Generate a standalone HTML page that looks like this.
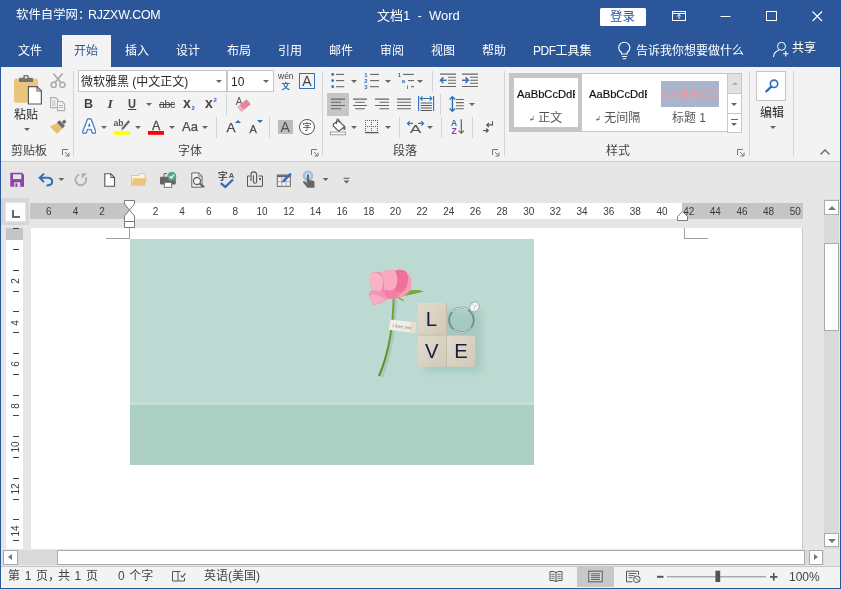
<!DOCTYPE html>
<html><head><meta charset="utf-8">
<style>
*{box-sizing:border-box;margin:0;padding:0}
html,body{width:841px;height:589px;overflow:hidden;background:#fff}
body{font-family:"Liberation Sans","Noto Sans CJK SC",sans-serif;font-size:12px;color:#262626;position:relative}
.a{position:absolute}
.t{position:absolute;white-space:nowrap;line-height:1}
#win{position:absolute;left:0;top:0;width:841px;height:589px;background:#e6e6e6;overflow:hidden;will-change:transform;opacity:.9999}
#title{left:0;top:0;width:841px;height:67px;background:#2b579a}
.w{color:#fff}
#ribbon{left:1px;top:67px;width:839px;height:95px;background:#f3f3f3;border-bottom:1px solid #cfcfcf}
.sep{position:absolute;width:1px;background:#d4d4d4}
.gl{position:absolute;font-size:12px;color:#444;line-height:1;white-space:nowrap}
svg{position:absolute;overflow:visible}
.rn{font-size:10px;color:#3b3b3b;width:20px;text-align:center}
.vn{transform:rotate(-90deg);transform-origin:50% 50%;width:20px;height:10px}
.sb{background:#fff;border:1px solid #ababab}
.tri-u{width:0;height:0;border-left:4px solid transparent;border-right:4px solid transparent;border-bottom:4px solid #777}
.tri-d{width:0;height:0;border-left:4px solid transparent;border-right:4px solid transparent;border-top:4px solid #777}
.tri-l{width:0;height:0;border-top:3.500px solid transparent;border-bottom:3.500px solid transparent;border-right:4.500px solid #777}
.tri-r{width:0;height:0;border-top:3.500px solid transparent;border-bottom:3.500px solid transparent;border-left:4.500px solid #777}
.dd{width:0;height:0;border-left:3px solid transparent;border-right:3px solid transparent;border-top:3px solid #666}
.box{background:#fff;border:1px solid #c6c6c6}
.sty{font-family:"Liberation Sans",sans-serif;font-size:11.200px;color:#111;width:58px;overflow:hidden;-webkit-text-stroke:.2px #111}
</style></head><body>
<div id="win">
<!-- TITLE BAR -->
<div class="a" id="title"></div>
<div class="t w" style="left:16px;top:8.500px;font-size:12.400px">软件自学网<span style="display:inline-block;width:10px">：</span><span style="letter-spacing:-.2px">RJZXW.COM</span></div>
<div class="t w" style="left:377px;top:9px;font-size:13px">文档1&nbsp; -&nbsp; Word</div>
<div class="a" style="left:600px;top:7.500px;width:46px;height:18.500px;background:#fff;border-radius:1.500px"></div>
<div class="t" style="left:610px;top:11px;font-size:12.500px;color:#2b579a">登录</div>
<svg style="left:590px;top:0" width="251" height="67" viewBox="590 0 251 67">
<g fill="none" stroke="#fff" stroke-width="1">
<rect x="672.500" y="11.500" width="13" height="9"/><path d="M672.500 13.500h13M679 19v-4.500M677 16.500l2-2l2 2"/>
<path d="M720.500 16.500h10"/>
<rect x="766.500" y="11.500" width="10" height="9"/>
<path d="M812.500 11.500l9.500 9.500M822 11.500l-9.500 9.500" stroke-width="1.100"/>
<path d="M621.500 54v-1.500q-2.800-2-2.800-4.700a5.600 5.600 0 0 1 11.200 0q0 2.700-2.800 4.700v1.500zM622 56.500h5M622.800 58.700h3.400" stroke-width="1.100"/>
<circle cx="781.500" cy="46.300" r="4"/><path d="M773.500 57q.5-5.500 5.500-6.800M783 53.800h5.500M785.700 51v5.600" stroke-width="1.100"/>
</g></svg>
<!-- tabs -->
<div class="a" style="left:62px;top:35px;width:49px;height:32px;background:#f3f3f3"></div>
<div class="t w" style="left:18px;top:44.500px">文件</div>
<div class="t" style="left:74px;top:44.500px;color:#2b579a">开始</div>
<div class="t w" style="left:125px;top:44.500px">插入</div>
<div class="t w" style="left:176px;top:44.500px">设计</div>
<div class="t w" style="left:227px;top:44.500px">布局</div>
<div class="t w" style="left:278px;top:44.500px">引用</div>
<div class="t w" style="left:329px;top:44.500px">邮件</div>
<div class="t w" style="left:380px;top:44.500px">审阅</div>
<div class="t w" style="left:431px;top:44.500px">视图</div>
<div class="t w" style="left:482px;top:44.500px">帮助</div>
<div class="t w" style="left:533px;top:44.500px"><span style="letter-spacing:-.5px">PDF</span>工具集</div>
<div class="t w" style="left:636px;top:44.500px">告诉我你想要做什么</div>
<div class="t w" style="left:792px;top:42px">共享</div>
<!-- RIBBON -->
<div class="a" id="ribbon"></div>
<div class="sep" style="left:73px;top:71px;height:85px"></div>
<div class="sep" style="left:322px;top:71px;height:85px"></div>
<div class="sep" style="left:504px;top:71px;height:85px"></div>
<div class="sep" style="left:749px;top:71px;height:85px"></div>
<div class="sep" style="left:793px;top:71px;height:85px"></div>
<div class="gl" style="left:14px;top:109px;color:#262626">粘贴</div>
<div class="a dd" style="left:24px;top:128px;border-top-color:#666"></div>
<div class="gl" style="left:11px;top:145px">剪贴板</div>
<svg style="left:62px;top:149px" width="8" height="8" viewBox="0 0 8 8"><path d="M0.500 6V0.500H6" fill="none" stroke="#777"/><path d="M3 3l3.500 3.500M7 3.500V7H3.500" fill="none" stroke="#777"/></svg>
<div class="a box" style="left:78px;top:70px;width:149px;height:22px"></div>
<div class="a box" style="left:227px;top:70px;width:47px;height:22px"></div>
<div class="t" style="left:81px;top:76px;font-size:12px;color:#262626">微软雅黑 (中文正文)</div>
<div class="t" style="left:231px;top:76px;font-size:12px;color:#262626">10</div>
<div class="a dd" style="left:216px;top:80px;border-top-color:#666"></div>
<div class="a dd" style="left:263px;top:80px;border-top-color:#666"></div>
<div class="gl" style="left:178px;top:145px">字体</div>
<svg style="left:311px;top:149px" width="8" height="8" viewBox="0 0 8 8"><path d="M0.500 6V0.500H6" fill="none" stroke="#777"/><path d="M3 3l3.500 3.500M7 3.500V7H3.500" fill="none" stroke="#777"/></svg>
<div class="t" style="left:84px;top:97.500px;font-size:12.500px;font-weight:bold;color:#444">B</div>
<div class="t" style="left:107.500px;top:96.500px;font-size:13.500px;font-style:italic;font-family:'Liberation Serif',serif;font-weight:bold;color:#444">I</div>
<div class="t" style="left:128px;top:98px;font-size:12px;font-weight:bold;color:#444;border-bottom:1px solid #444;padding-bottom:0px;height:12px;transform:scaleX(.92);transform-origin:0 0">U</div>
<div class="a dd" style="left:146px;top:103px;border-top-color:#666"></div>
<div class="t" style="left:159px;top:99px;font-size:10.500px;color:#444;text-decoration:line-through;letter-spacing:-.4px">abc</div>
<div class="t" style="left:183px;top:96px;font-size:14px;font-weight:bold;color:#444">x</div><div class="t" style="left:191.500px;top:105px;font-size:6px;font-weight:bold;color:#2b6cb8">2</div>
<div class="t" style="left:205px;top:96px;font-size:14px;font-weight:bold;color:#444">x</div><div class="t" style="left:213.500px;top:97px;font-size:6px;font-weight:bold;color:#2b6cb8">2</div>
<div class="sep" style="left:226px;top:94px;height:21px"></div>
<div class="a dd" style="left:101px;top:126px;border-top-color:#666"></div>
<div class="a dd" style="left:135px;top:126px;border-top-color:#666"></div>
<div class="a dd" style="left:169px;top:126px;border-top-color:#666"></div>
<div class="a dd" style="left:202px;top:126px;border-top-color:#666"></div>
<div class="t" style="left:182px;top:120px;font-size:13px;color:#4a4a4a;-webkit-text-stroke:.25px #4a4a4a">Aa</div>
<div class="sep" style="left:216px;top:117px;height:21px"></div>
<div class="sep" style="left:269px;top:117px;height:21px"></div>
<div class="gl" style="left:393px;top:145px">段落</div>
<svg style="left:492px;top:149px" width="8" height="8" viewBox="0 0 8 8"><path d="M0.500 6V0.500H6" fill="none" stroke="#777"/><path d="M3 3l3.500 3.500M7 3.500V7H3.500" fill="none" stroke="#777"/></svg>
<div class="a" style="left:327px;top:93px;width:22px;height:23px;background:#c6c6c6"></div>
<div class="a dd" style="left:351px;top:80px;border-top-color:#666"></div>
<div class="a dd" style="left:385px;top:80px;border-top-color:#666"></div>
<div class="a dd" style="left:417px;top:80px;border-top-color:#666"></div>
<div class="a dd" style="left:469px;top:103px;border-top-color:#666"></div>
<div class="a dd" style="left:351px;top:126px;border-top-color:#666"></div>
<div class="a dd" style="left:385px;top:126px;border-top-color:#666"></div>
<div class="a dd" style="left:427px;top:126px;border-top-color:#666"></div>
<div class="sep" style="left:432px;top:71px;height:21px"></div>
<div class="sep" style="left:440px;top:94px;height:21px"></div>
<div class="sep" style="left:399px;top:117px;height:21px"></div>
<div class="sep" style="left:441px;top:117px;height:21px"></div>
<div class="sep" style="left:472px;top:117px;height:21px"></div>
<div class="a" style="left:509px;top:73px;width:233px;height:59px;background:#fff;border:1px solid #c6c6c6"></div>
<div class="a" style="left:510px;top:74px;width:72px;height:57px;border:4px solid #c6c6c6"></div>
<div class="t sty" style="left:517px;top:89px">AaBbCcDdE</div>
<div class="t sty" style="left:589px;top:89px">AaBbCcDdE</div>
<div class="a" style="left:661px;top:81px;width:58px;height:26px;background:#a9b5cc"></div>
<div class="t" style="left:661px;top:88px;font-size:13px;color:#f3939f;letter-spacing:.9px;width:58px;overflow:hidden">AABBCCD</div>
<div class="t" style="left:529px;top:112px;font-size:12px;color:#555"><span style="font-size:7px;position:relative;top:-1px">↲</span> 正文</div>
<div class="t" style="left:595px;top:112px;font-size:12px;color:#555"><span style="font-size:7px;position:relative;top:-1px">↲</span> 无间隔</div>
<div class="t" style="left:672px;top:112px;font-size:12px;color:#555">标题 1</div>
<div class="a" style="left:727px;top:73px;width:15px;height:21px;background:#e1e1e1;border:1px solid #c6c6c6"></div>
<div class="a" style="left:727px;top:93px;width:15px;height:21px;background:#fff;border:1px solid #c6c6c6"></div>
<div class="a" style="left:727px;top:113px;width:15px;height:20px;background:#fff;border:1px solid #c6c6c6"></div>
<div class="a" style="left:732px;top:82px;width:0;height:0;border-left:3px solid transparent;border-right:3px solid transparent;border-bottom:3px solid #b0b0b0"></div>
<div class="a dd" style="left:731px;top:103px;border-top-color:#666"></div>
<div class="a dd" style="left:731px;top:123px;border-top-color:#666"></div>
<div class="a" style="left:731px;top:119px;width:7px;height:1px;background:#666"></div>
<div class="gl" style="left:606px;top:145px">样式</div>
<svg style="left:737px;top:149px" width="8" height="8" viewBox="0 0 8 8"><path d="M0.500 6V0.500H6" fill="none" stroke="#777"/><path d="M3 3l3.500 3.500M7 3.500V7H3.500" fill="none" stroke="#777"/></svg>
<div class="a" style="left:756px;top:71px;width:30px;height:30px;background:#fdfdfd;border:1px solid #c6c6c6"></div>
<div class="gl" style="left:760px;top:107px;color:#262626">编辑</div>
<div class="a dd" style="left:770px;top:126px;border-top-color:#666"></div>
<svg style="left:819px;top:148px" width="12" height="8" viewBox="0 0 12 8"><path d="M1.500 6.500l4.500-4.500l4.500 4.500" fill="none" stroke="#666" stroke-width="1.400"/></svg>
<svg style="left:13px;top:74px" width="30" height="32" viewBox="13 74 30 32">
<rect x="14" y="78.500" width="24" height="24.300" rx="1.800" fill="#ebc57e"/>
<path d="M19 82v-3.200q0-1 1-1h3.300v-1.500q0-1.300 1.300-1.300h2.800q1.300 0 1.300 1.300v1.500h3.300q1 0 1 1v3.200z" fill="#737373"/>
<rect x="24.800" y="76.300" width="2.400" height="2" fill="#f3f3f3"/>
<path d="M28.400 86.600h8.600l4.400 4.400v13h-13z" fill="#fff" stroke="#5a5a5a" stroke-width="1.200"/>
<path d="M37 86.600v4.400h4.400" fill="none" stroke="#5a5a5a" stroke-width="1.100"/>
</svg>
<svg style="left:50px;top:72px" width="16" height="17" viewBox="50 72 16 17">
<g fill="none" stroke="#ababab" stroke-width="1.500"><circle cx="53.700" cy="84.800" r="2.600"/><circle cx="62.300" cy="84.800" r="2.600"/>
<path d="M53.500 73.500l7.600 9.300M62.500 73.500l-7.600 9.300" stroke-width="1.700"/></g></svg>
<svg style="left:49px;top:96px" width="17" height="16" viewBox="49 96 17 16">
<g fill="#f3f3f3" stroke="#b3adb3" stroke-width="1.100"><path d="M50.600 97.600h5l2.500 2.500v7.500h-7.500z"/><path d="M57.500 101.500h4.500l2.600 2.600v6.500h-7.100z"/></g>
<path d="M52 101h3.500M52 103h3.500M52 105h3.500M59 105.500h4M59 107.500h4" stroke="#b3adb3" stroke-width=".9" fill="none"/></svg>
<svg style="left:49px;top:118px" width="19" height="18" viewBox="49 118 19 18">
<path d="M50 126.500l7.500-3.500l5 5.500l-5.500 5.500z" fill="#e9bf73"/>
<path d="M57 122.600l2.600-2.400l5.400 5.600l-2.500 2.600z" fill="#6b6b6b"/>
<path d="M61.800 121.800l2.500-2.300l2.200 2.300l-2.400 2.400z" fill="#6b6b6b"/>
</svg>
<svg style="left:80px;top:117px" width="18" height="18" viewBox="80 117 18 18"><defs><filter id="gl"><feGaussianBlur stdDeviation=".6"/></filter></defs>
<text x="89.200" y="132.300" font-family="Liberation Sans,sans-serif" font-size="16.500" text-anchor="middle" fill="none" stroke="#8fb6e0" stroke-width="4" stroke-linejoin="round" filter="url(#gl)">A</text>
<text x="89.200" y="132.300" font-family="Liberation Sans,sans-serif" font-size="16.500" text-anchor="middle" fill="#2f6fb7" stroke="#2f6fb7" stroke-width="2.800" stroke-linejoin="round">A</text>
<text x="89.200" y="132.300" font-family="Liberation Sans,sans-serif" font-size="16.500" text-anchor="middle" fill="#fff" stroke="#fff" stroke-width=".9" stroke-linejoin="round">A</text></svg>
<svg style="left:113px;top:118px" width="19" height="18" viewBox="113 118 19 18">
<text x="113.600" y="125.800" font-family="Liberation Sans,sans-serif" font-size="8.500" font-weight="bold" fill="#555">ab</text>
<path d="M128.300 120.200l1.800 1.500l-6.300 7.300l-2.600 1.300l.8-2.800z" fill="#6a6a6a"/>
<rect x="114" y="131" width="16" height="3.800" fill="#ffff00"/></svg>
<svg style="left:147px;top:118px" width="18" height="18" viewBox="147 118 18 18">
<text x="156.200" y="130.300" font-family="Liberation Sans,sans-serif" font-size="12.500" text-anchor="middle" fill="#4a4a4a" stroke="#4a4a4a" stroke-width=".3">A</text>
<rect x="148" y="131" width="16" height="3.800" fill="#ff0000"/></svg>
<div class="t" style="left:278px;top:72px;font-size:8.500px;color:#444;letter-spacing:0">wén</div>
<div class="t" style="left:281.500px;top:81.500px;font-size:8.500px;font-weight:bold;color:#2b6cb8">文</div>
<div class="a" style="left:299px;top:73px;width:16px;height:16px;border:1px solid #2f6fb7"></div>
<div class="t" style="left:302px;top:74px;font-size:14px;color:#444;width:10px;text-align:center">A</div>
<svg style="left:234px;top:96px" width="18" height="17" viewBox="234 96 18 17">
<text x="235.700" y="105" font-family="Liberation Sans,sans-serif" font-size="10" fill="#555">A</text>
<g transform="rotate(-40 244 105.500)"><rect x="238" y="102.300" width="12" height="6.500" rx=".8" fill="#e8839b"/><rect x="238" y="102.300" width="3.200" height="6.500" rx=".8" fill="#f0aebd"/></g></svg>
<div class="t" style="left:226.500px;top:121px;font-size:13.500px;color:#4a4a4a;-webkit-text-stroke:.25px #4a4a4a">A</div>
<div class="t" style="left:249.500px;top:123.500px;font-size:11px;color:#4a4a4a;-webkit-text-stroke:.25px #4a4a4a">A</div>
<div class="a" style="left:235px;top:120px;width:0;height:0;border-left:3px solid transparent;border-right:3px solid transparent;border-bottom:3px solid #2f6fb7"></div>
<div class="a" style="left:256.500px;top:120px;width:0;height:0;border-left:3px solid transparent;border-right:3px solid transparent;border-top:3px solid #2f6fb7"></div>
<div class="a" style="left:278px;top:120px;width:14.500px;height:14px;background:#bdbdbd"></div>
<div class="t" style="left:278px;top:120px;font-size:14px;color:#505050;width:14.500px;text-align:center">A</div>
<div class="a" style="left:299px;top:119px;width:16px;height:16px;border:1px solid #555;border-radius:50%;background:#fff"></div>
<div class="t" style="left:302.500px;top:122.500px;font-size:9px;color:#444">字</div>
<svg style="left:324px;top:68px" width="180" height="72" viewBox="324 68 180 72">
<circle cx="332.700" cy="74.4" r="1.400" fill="#2f6fb7"/><path d="M336 74.4h8.200" stroke="#666" stroke-width="1.100"/>
<circle cx="332.700" cy="80.6" r="1.400" fill="#2f6fb7"/><path d="M336 80.6h8.200" stroke="#666" stroke-width="1.100"/>
<circle cx="332.700" cy="86.7" r="1.400" fill="#2f6fb7"/><path d="M336 86.7h8.200" stroke="#666" stroke-width="1.100"/>
<text x="364.300" y="76.5" font-family="Liberation Sans,sans-serif" font-size="6" font-weight="bold" fill="#2f6fb7">1</text><path d="M370 74.4h9" stroke="#666" stroke-width="1.100"/>
<text x="364.300" y="82.7" font-family="Liberation Sans,sans-serif" font-size="6" font-weight="bold" fill="#2f6fb7">2</text><path d="M370 80.6h9" stroke="#666" stroke-width="1.100"/>
<text x="364.300" y="88.8" font-family="Liberation Sans,sans-serif" font-size="6" font-weight="bold" fill="#2f6fb7">3</text><path d="M370 86.7h9" stroke="#666" stroke-width="1.100"/>
<text x="397.700" y="76.500" font-family="Liberation Sans,sans-serif" font-size="6" font-weight="bold" fill="#2f6fb7">1</text><path d="M403 74.400h11" stroke="#666" stroke-width="1.100"/>
<text x="401.700" y="82.500" font-family="Liberation Sans,sans-serif" font-size="6" font-weight="bold" fill="#2f6fb7">a</text><path d="M408 80.600h6" stroke="#666" stroke-width="1.100"/>
<text x="406.700" y="88.800" font-family="Liberation Sans,sans-serif" font-size="6" font-weight="bold" fill="#2f6fb7">i</text><path d="M411 86.700h3" stroke="#666" stroke-width="1.100"/>
<path d="M440 74.1h16M448 77.2h8M448 80.2h8M448 83.3h8M440 86.5h16" stroke="#666" stroke-width="1.100" fill="none"/><path d="M440.5 80.200h6M443.3 77.400l-2.800 2.800l2.800 2.800" stroke="#2f6fb7" stroke-width="1.500" fill="none"/>
<path d="M462 74.1h16M470 77.2h8M470 80.2h8M470 83.3h8M462 86.5h16" stroke="#666" stroke-width="1.100" fill="none"/><path d="M462 80.200h6M465.5 77.400l2.800 2.800l-2.800 2.800" stroke="#2f6fb7" stroke-width="1.500" fill="none"/>
<path d="M331 99.1h14M331 102.3h10M331 105.5h14M331 108.7h10" stroke="#666" stroke-width="1.100" fill="none"/>
<path d="M353 99.1h14M355.2 102.3h9.6M353 105.5h14M355.2 108.7h9.6" stroke="#666" stroke-width="1.100" fill="none"/>
<path d="M375 99.1h14M379.4 102.3h9.6M375 105.5h14M379.4 108.7h9.6" stroke="#666" stroke-width="1.100" fill="none"/>
<path d="M397 99.1h14M397 102.3h14M397 105.5h14M397 108.7h14" stroke="#666" stroke-width="1.100" fill="none"/>
<path d="M418.600 96v15M433.600 96v15" stroke="#2f6fb7" stroke-width="1.100"/><path d="M420.300 98.500h11.600M422.500 96.300l-2.200 2.200l2.200 2.200M429.700 96.300l2.200 2.200l-2.200 2.200" stroke="#2f6fb7" stroke-width="1.100" fill="none"/>
<path d="M420.700 103h11.200M420.700 105.500h11.200M420.700 108h11.200M420.700 110.500h11.200" stroke="#555" stroke-width="1.200"/>
<path d="M452.400 96.800v14.400M449.600 99.600l2.800-2.800l2.800 2.800M449.600 108.400l2.800 2.800l2.800-2.800" stroke="#2f6fb7" stroke-width="1.400" fill="none"/>
<path d="M456 99.5h7.800M456 102.6h7.800M456 105.7h7.800M456 108.7h7.800" stroke="#666" stroke-width="1.100" fill="none"/>
<path d="M333.300 124.300l5.200-3.800l6 6.200l-5.800 4.600l-5.400-5.400z" fill="#fff" stroke="#555" stroke-width="1.100"/><path d="M336.500 124v-3.700q0-1.300 1.300-1.300t1.300 1.300v2.200" fill="none" stroke="#555" stroke-width="1"/>
<path d="M343.500 124q2.500 2.500 2 5.500q-1.500 1-2.500-.5q1.500-2.500 .5-5z" fill="#2f6fb7"/>
<rect x="330.500" y="132" width="15" height="2.800" fill="#fff" stroke="#888" stroke-width=".8"/>
<path d="M365 120.500h14M365 126.500h14M365.500 120v12.500M371.500 120v12.500M377.500 120v12.500" stroke="#5a5a5a" stroke-width="1" stroke-dasharray="1 1" fill="none"/><path d="M365 132.600h13.500" stroke="#555" stroke-width="1.300"/>
<text x="415.500" y="132.700" font-family="Liberation Sans,sans-serif" font-size="10" text-anchor="middle" fill="#555" transform="translate(415.500 0) scale(1.750 1) translate(-415.500 0)">A</text>
<path d="M407.500 123.400h5.500M409.700 121.200l-2.200 2.200l2.200 2.200M418 123.400h5.500M421.300 121.200l2.200 2.200l-2.200 2.200" stroke="#2f6fb7" stroke-width="1.200" fill="none"/>
<text x="454" y="125.600" font-family="Liberation Sans,sans-serif" font-size="8.500" font-weight="bold" text-anchor="middle" fill="#2f6fb7">A</text><text x="454" y="133.900" font-family="Liberation Sans,sans-serif" font-size="8.500" font-weight="bold" text-anchor="middle" fill="#8a3fa8">Z</text>
<path d="M461.300 119.200v14M458.600 130.600l2.700 2.700l2.700-2.700" stroke="#555" stroke-width="1.100" fill="none"/>
<path d="M492.500 121.300v3.600h-5.500M488.900 122.800l-2.200 2.100l2.200 2.100" stroke="#555" stroke-width="1.100" fill="none"/><path d="M483.200 130.600h5M486.200 128.500l2.100 2.100l-2.100 2.100" stroke="#555" stroke-width="1.100" fill="none"/>
</svg>
<svg style="left:762px;top:76px" width="18" height="18" viewBox="762 76 18 18"><circle cx="774" cy="83.800" r="3.700" fill="none" stroke="#2f6fb7" stroke-width="1.600"/><path d="M771.300 86.600l-5 4.800" stroke="#2f6fb7" stroke-width="2.200" stroke-linecap="round"/></svg>
<!--RIBBON-ICONS-->
<!-- QAT -->
<div class="a" style="left:1px;top:162px;width:839px;height:36px;background:#e6e6e6"></div>
<svg style="left:0;top:165px" width="360" height="30" viewBox="0 165 360 30">
<path d="M10.300 172.800h11.700l2 2v12h-13.700z" fill="#8b45a8"/><rect x="13" y="174.300" width="8.300" height="4.800" fill="#e6e6e6"/><rect x="14.200" y="182.300" width="6" height="4.500" fill="#e6e6e6"/><rect x="15.400" y="183.300" width="2" height="3.500" fill="#8b45a8"/>
<path d="M40 177.800h7.500q4.700 0 4.700 3.800q0 3.600-4.700 3.800h-1" fill="none" stroke="#2f6fb7" stroke-width="2"/><path d="M44 173.600l-4.300 4.200l4.300 4.200" fill="none" stroke="#2f6fb7" stroke-width="2"/>
<path d="M58.400 178h6l-3 3z" fill="#666"/>
<path d="M79.300 174.600a5.400 5.400 0 1 0 6.300 2.600" fill="none" stroke="#b0b0b0" stroke-width="1.900"/><path d="M81.600 173.200h5.400l-5.400 5.600z" fill="#b0b0b0"/>
<path d="M104.800 173.800h6l3.700 3.700v8.800h-9.700z" fill="#fff" stroke="#555" stroke-width="1.100"/><path d="M110.800 173.800v3.700h3.700" fill="none" stroke="#555" stroke-width="1"/>
<path d="M131.600 185v-9.500h7l1.500-2h4.300q.8 0 .8.800v5" fill="#fcf3e0" stroke="#ebc57e" stroke-width="1.100"/><path d="M131.200 185.800l2.200-7.500h13.700l-2.300 7.500z" fill="#ebc57e"/>
<rect x="160" y="176.700" width="15.800" height="7.700" rx="1" fill="#666"/><path d="M167 173.500h-3v3.500" fill="none" stroke="#666" stroke-width="1"/><rect x="164.300" y="182.300" width="7.400" height="5" fill="#fff" stroke="#666" stroke-width=".9"/><circle cx="171.800" cy="176.200" r="4.500" fill="#5aa68a"/><path d="M169.600 176.300l1.600 1.700l2.900-3.400" fill="none" stroke="#fff" stroke-width="1.200"/>
<path d="M191.800 172.900h7l3.200 3.200v11.100h-10.200z" fill="#f4f4f4" stroke="#666" stroke-width="1"/><path d="M198.800 172.900v3.200h3.200" fill="none" stroke="#666" stroke-width=".8"/><circle cx="197" cy="181" r="3.500" fill="#f8f8f8" stroke="#666" stroke-width="1.300"/><path d="M199.700 183.600l4.500 3.500" stroke="#666" stroke-width="2"/>
<text x="217.800" y="180.300" font-family="Liberation Sans,Noto Sans CJK SC,sans-serif" font-size="10" font-weight="bold" fill="#555">字</text><text x="228.700" y="178" font-family="Liberation Sans,sans-serif" font-size="7.500" font-weight="bold" fill="#555">A</text>
<path d="M220.800 183.200l4.500 3.800l7.700-7.500" fill="none" stroke="#2f6fb7" stroke-width="2.300"/>
<path d="M250 176h-2.500v10.300h15v-10.300h-4" fill="none" stroke="#555" stroke-width="1"/><path d="M251 181v-6.300a2.800 2.800 0 0 1 5.600 0v7a1.600 1.600 0 0 1-3.200 0v-6.500" fill="none" stroke="#555" stroke-width="1.100"/><rect x="259" y="178" width="2" height="2" fill="#2f6fb7"/>
<rect x="277.300" y="175" width="13" height="11.300" fill="#f4f4f4" stroke="#666" stroke-width="1"/><path d="M277.300 176.200h13" stroke="#666" stroke-width="2"/><path d="M277.300 181.700h13M281.700 177v9M286 177v9" stroke="#999" stroke-width=".8"/><path d="M290 172.700l1.800 1.800l-7.300 7.300l-2.600.8l.8-2.600z" fill="#2f6fb7"/>
<circle cx="308" cy="175.800" r="4" fill="none" stroke="#9cc0e8" stroke-width="2.600"/>
<path d="M306.800 175.500q0-1.300 1.200-1.300t1.200 1.300v4.500l4 .8q1.300.3 1.300 1.600v5.300h-7l-4.300-5q-.6-.9.200-1.500q.8-.5 1.600.2l1.800 1.600z" fill="#666"/>
<path d="M322.600 178h6l-3 3z" fill="#666"/>
<path d="M343.500 178.300h6" stroke="#666" stroke-width="1.100"/><path d="M343.500 180.500h6l-3 3z" fill="#666"/>
</svg>
<!-- DOC AREA -->
<div class="a" id="doc" style="left:1px;top:198px;width:839px;height:369px;background:#e6e6e6"></div>
<!-- tab selector -->
<div class="a" style="left:1px;top:198px;width:28px;height:27px;background:#d6d6d6"></div>
<div class="a" style="left:4.500px;top:201.500px;width:21.500px;height:20px;background:#fcfcfc;border:1px solid #e6e6e6"></div>
<div class="a" style="left:12px;top:210px;width:8px;height:8px;border-left:2px solid #666;border-bottom:2px solid #666"></div>
<div class="a" style="left:30px;top:203px;width:773px;height:16px;background:#c5c5c5"></div>
<div class="a" style="left:130px;top:203px;width:552px;height:16px;background:#fff"></div>
<div class="t rn" style="left:38.8px;top:207px">6</div>
<div class="t rn" style="left:65.5px;top:207px">4</div>
<div class="t rn" style="left:92.1px;top:207px">2</div>
<div class="t rn" style="left:145.5px;top:207px">2</div>
<div class="t rn" style="left:172.1px;top:207px">4</div>
<div class="t rn" style="left:198.8px;top:207px">6</div>
<div class="t rn" style="left:225.4px;top:207px">8</div>
<div class="t rn" style="left:252.1px;top:207px">10</div>
<div class="t rn" style="left:278.8px;top:207px">12</div>
<div class="t rn" style="left:305.4px;top:207px">14</div>
<div class="t rn" style="left:332.1px;top:207px">16</div>
<div class="t rn" style="left:358.7px;top:207px">18</div>
<div class="t rn" style="left:385.4px;top:207px">20</div>
<div class="t rn" style="left:412.1px;top:207px">22</div>
<div class="t rn" style="left:438.7px;top:207px">24</div>
<div class="t rn" style="left:465.4px;top:207px">26</div>
<div class="t rn" style="left:492.0px;top:207px">28</div>
<div class="t rn" style="left:518.7px;top:207px">30</div>
<div class="t rn" style="left:545.4px;top:207px">32</div>
<div class="t rn" style="left:572.0px;top:207px">34</div>
<div class="t rn" style="left:598.7px;top:207px">36</div>
<div class="t rn" style="left:625.3px;top:207px">38</div>
<div class="t rn" style="left:652.0px;top:207px">40</div>
<div class="t rn" style="left:678.7px;top:207px">42</div>
<div class="t rn" style="left:705.3px;top:207px">44</div>
<div class="t rn" style="left:732.0px;top:207px">46</div>
<div class="t rn" style="left:758.6px;top:207px">48</div>
<div class="t rn" style="left:785.3px;top:207px">50</div>
<div class="a" style="left:6px;top:228px;width:17px;height:321px;background:#fff"></div>
<div class="a" style="left:6px;top:228px;width:17px;height:12px;background:#c5c5c5"></div>
<div class="a" style="left:13px;top:228px;width:6px;height:1px;background:#444"></div>
<div class="a" style="left:13px;top:249px;width:6px;height:1px;background:#444"></div>
<div class="a" style="left:13px;top:270px;width:6px;height:1px;background:#444"></div>
<div class="a" style="left:13px;top:291px;width:6px;height:1px;background:#444"></div>
<div class="a" style="left:13px;top:311px;width:6px;height:1px;background:#444"></div>
<div class="a" style="left:13px;top:332px;width:6px;height:1px;background:#444"></div>
<div class="a" style="left:13px;top:353px;width:6px;height:1px;background:#444"></div>
<div class="a" style="left:13px;top:374px;width:6px;height:1px;background:#444"></div>
<div class="a" style="left:13px;top:395px;width:6px;height:1px;background:#444"></div>
<div class="a" style="left:13px;top:415px;width:6px;height:1px;background:#444"></div>
<div class="a" style="left:13px;top:436px;width:6px;height:1px;background:#444"></div>
<div class="a" style="left:13px;top:457px;width:6px;height:1px;background:#444"></div>
<div class="a" style="left:13px;top:478px;width:6px;height:1px;background:#444"></div>
<div class="a" style="left:13px;top:499px;width:6px;height:1px;background:#444"></div>
<div class="a" style="left:13px;top:519px;width:6px;height:1px;background:#444"></div>
<div class="a" style="left:13px;top:540px;width:6px;height:1px;background:#444"></div>
<div class="t rn vn" style="left:6px;top:275.9px">2</div>
<div class="t rn vn" style="left:6px;top:317.5px">4</div>
<div class="t rn vn" style="left:6px;top:359.1px">6</div>
<div class="t rn vn" style="left:6px;top:400.7px">8</div>
<div class="t rn vn" style="left:6px;top:442.3px">10</div>
<div class="t rn vn" style="left:6px;top:483.9px">12</div>
<div class="t rn vn" style="left:6px;top:525.5px">14</div>
<div class="a" style="left:31px;top:228px;width:772px;height:321px;background:#fff;border-right:1px solid #c6c6c6"></div>
<div class="a" style="left:106px;top:228px;width:24px;height:11px;border-right:1px solid #a0a0a0;border-bottom:1px solid #a0a0a0"></div>
<div class="a" style="left:684px;top:228px;width:24px;height:11px;border-left:1px solid #a0a0a0;border-bottom:1px solid #a0a0a0"></div>
<div class="a" id="img" style="left:130px;top:239px;width:404px;height:226px;background:#bcdad1;overflow:hidden"><div class="a" style="left:0;top:162.500px;width:404px;height:64px;background:#acd0c4;border-top:3px solid #c3dfd6"></div><svg style="left:0;top:0" width="404" height="226" viewBox="130 239 404 226">
<defs><filter id="bl" x="-30%" y="-30%" width="160%" height="160%"><feGaussianBlur stdDeviation="3.500"/></filter><filter id="b1" x="-10%" y="-10%" width="120%" height="120%"><feGaussianBlur stdDeviation="0.450"/></filter>
<linearGradient id="wood" x1="0" y1="0" x2="1" y2="1"><stop offset="0" stop-color="#e2dbce"/><stop offset="1" stop-color="#d2c8b6"/></linearGradient>
<linearGradient id="stem" x1="0" y1="0" x2="0" y2="1"><stop offset="0" stop-color="#86a33a"/><stop offset="1" stop-color="#5b8722"/></linearGradient></defs>
<rect x="424" y="310" width="58" height="62" fill="#8dbcb2" opacity=".5" filter="url(#bl)"/>
<path d="M395.500 299 C395 322 392 352 381.500 377" fill="none" stroke="#a3cbc1" stroke-width="3" filter="url(#b1)"/>
<path d="M393.600 296 C393.400 322 390 350 379.300 375.300" fill="none" stroke="url(#stem)" stroke-width="2" stroke-linecap="round"/>
<path d="M399 294.500 C406 289.500 416 288.800 424 291.300 C417 293.600 408 295.500 401 296.500z" fill="#7da53f"/>
<path d="M398 296 l6 4.500 l-1 .8 l-6.500-4z" fill="#8aa843"/>
<g filter="url(#b1)">
<path d="M371 273.500 C374 271 378 271.500 381 273 C385 269.500 391 269.300 395 271 C399 268.800 405 270 407 273 C411 276 412.500 283 410.500 289 C408 294 403 297.500 397 297.500 C395 299 391 299.500 388 298.500 C384 302 377 305 373.500 304.500 C371.500 302 370 298 369 294.500 C369.500 292 371 291 373 290.500 C369.500 286 368.500 278 371 273.500z" fill="#f489ab"/>
<path d="M371 273.500 C375 271 380 273 382.500 278 C384 283 383 288 380 291.500 C376 291.500 373.500 290.800 373 290.500 C369.500 286 368.500 278 371 273.500z" fill="#f8b3c7"/>
<path d="M381 273 C386 269.500 392 269.500 395 271 C399 274 400 280 398 286 C394 290 388 291 384 289.500 C384.500 283 383.500 277 381 273z" fill="#f9a9c1"/>
<path d="M395 271 C399 268.800 405 270 407 273 C409 279 408 286 404 291 C400 293 396 292.500 394 291 C398 285 398.500 277 395 271z" fill="#ef7099"/>
<path d="M407 273 C411 276 412.500 283 410.500 289 C408 294 403 297.500 397 297.500 C401 293.500 404 291 404 291 C408 286 409 279 407 273z" fill="#f79bb7"/>
<path d="M385 289.500 C389 291.500 393 292 396 291 C397.500 293.500 397.500 296 397 297.500 C394 299.500 390 299.500 387.500 298 C385 296 384.500 292.500 385 289.500z" fill="#f27ea4"/>
<path d="M373 290.500 C377 290 383 292 387.500 298 C383.500 302 377 305 373.500 304.500 C371.500 302 370 298 369 294.500 C369.500 292 371 291 373 290.500z" fill="#f796b4"/>
<path d="M370 295 C375 294 381 296 385 299.500 C381 302.500 376.500 304.600 373.500 304.500 C371.500 302 370.500 298.500 370 295z" fill="#f9adc4"/>
</g>
<g transform="rotate(7 402.500 326)"><rect x="389.500" y="321" width="26" height="10.400" fill="#f1eee6"/><rect x="410.500" y="321" width="5" height="10.400" fill="#e6dfcf"/>
<text x="392.500" y="328.200" font-family="Liberation Serif,serif" font-style="italic" font-size="5" fill="#777">i love you</text></g>
<rect x="417.700" y="303" width="28.800" height="32.100" fill="url(#wood)"/>
<rect x="417.700" y="335.100" width="28.800" height="31.700" fill="url(#wood)"/>
<rect x="446.500" y="335.100" width="28.700" height="31.700" fill="url(#wood)"/>
<path d="M417.700 335.100h57.500M446.500 303v63.800" stroke="#bfb5a3" stroke-width=".7" fill="none"/>
<g font-family="Liberation Sans,sans-serif" font-size="20.300" fill="#1c1d3e" text-anchor="middle">
<text x="431.300" y="326.200">L</text><text x="431.800" y="358">V</text><text x="461" y="358">E</text></g>
<circle cx="461.400" cy="320" r="12.300" fill="none" stroke="#788b90" stroke-width="1.900"/>
<path d="M452 312 A12.300 12.300 0 0 1 468 309.700" fill="none" stroke="#f2f6f6" stroke-width="1"/>
<path d="M453 329.500 A12.300 12.300 0 0 0 471 327.500" fill="none" stroke="#dfe8e8" stroke-width=".9"/>
<path d="M469.500 307.500 l2-4.500 l4.500-1.300 l3.500 3 l-.8 4.700 l-4 2.600 l-4.200-1.200z" fill="#f3f7f7" stroke="#8fa0a4" stroke-width=".8"/>
<path d="M471.500 303l3 3.500l4.500-1.800M474.500 306.500l-.5 5.200" stroke="#a9b8bb" stroke-width=".6" fill="none"/>
</svg></div>
<svg style="left:122px;top:199px" width="16" height="30" viewBox="0 0 16 30"><path d="M2.5 1.5h10v3.500l-5 6l5 6v5.500h-10v-5.500l5-6l-5-6z" fill="#fff" stroke="#7a7a7a"/><path d="M2.500 22.5h10v6h-10z" fill="#fff" stroke="#7a7a7a"/></svg>
<svg style="left:676px;top:210px" width="14" height="12" viewBox="0 0 14 12"><path d="M1.5 10.500v-4l5-5l5 5v4z" fill="#fff" stroke="#7a7a7a"/></svg>
<div class="a" style="left:824px;top:199px;width:15px;height:350px;background:#dadada"></div>
<div class="a sb" style="left:824px;top:200px;width:15px;height:15px"></div>
<div class="a sb" style="left:824px;top:243px;width:15px;height:88px"></div>
<div class="a sb" style="left:824px;top:533px;width:15px;height:14px"></div>
<div class="a tri-u" style="left:827.500px;top:206px"></div>
<div class="a tri-d" style="left:827.500px;top:538.500px"></div>
<div class="a" style="left:2px;top:550px;width:822px;height:15px;background:#dadada"></div>
<div class="a sb" style="left:3px;top:550px;width:15px;height:15px"></div>
<div class="a sb" style="left:57px;top:550px;width:748px;height:15px"></div>
<div class="a sb" style="left:809px;top:550px;width:14px;height:15px"></div>
<div class="a tri-l" style="left:8px;top:554px"></div>
<div class="a tri-r" style="left:814px;top:554px"></div>
<!--DOC-END-->
<!-- STATUS -->
<div class="a" id="status" style="left:1px;top:566px;width:839px;height:22px;background:#f3f3f3;border-top:1px solid #c8c8c8"></div>
<div class="t" style="left:8px;top:570px;font-size:12px;color:#444;word-spacing:1.300px">第 1 页<span style="display:inline-block;width:10px">，</span>共 1 页</div>
<div class="t" style="left:118px;top:570px;font-size:12px;color:#444;word-spacing:1.300px">0 个字</div>
<div class="t" style="left:204px;top:570px;font-size:12px;color:#444;word-spacing:1.300px">英语(美国)</div>
<div class="t" style="left:789px;top:570.500px;font-size:12px;color:#444;word-spacing:1.300px">100%</div>
<div class="a" style="left:576.500px;top:566px;width:37.500px;height:21px;background:#c8c8c8"></div>
<svg style="left:0;top:566px" width="841" height="21" viewBox="0 566 841 21">
<g fill="none" stroke="#555" stroke-width="1">
<path d="M172.500 571.500h5.500v9.500h-5.500zM178 571.500h2.500M178 581h6.500v-3"/><path d="M180.800 575.500l1.700 1.700l3-4" stroke-width="1.100"/>
<path d="M556 572.500q-3-1.800-6-.8v9q3-1 6 .8q3-1.800 6-.8v-9q-3-1-6 .8zM556 572.500v9"/>
<path d="M551.300 574.300h3.400M551.300 576.300h3.400M551.300 578.300h3.400M557.300 574.300h3.400M557.300 576.300h3.400M557.300 578.300h3.400" stroke-width=".8"/>
<rect x="588.800" y="571.200" width="13.400" height="10.600" fill="#d8d8d8"/>
<path d="M591 573.800h9M591 575.700h9M591 577.600h9M591 579.500h9" stroke-width=".9"/>
<path d="M638.500 575v-3.800h-12v10.600h6"/><path d="M628.500 573.500h8M628.500 575.600h6M628.500 577.700h4" stroke-width=".9"/>
<circle cx="636.800" cy="579.300" r="3.300" fill="#f3f3f3"/><path d="M634.500 577l4.600 4.600" stroke-width=".9"/>
</g>
<path d="M657 576.800h6.500" stroke="#555" stroke-width="2"/>
<path d="M667 576.800h99" stroke="#8a8a8a" stroke-width="1"/>
<rect x="715.400" y="570.700" width="4.800" height="11.300" fill="#555"/>
<path d="M770 576.800h7.500M773.750 573v7.600" stroke="#555" stroke-width="1.700"/>
</svg>
<!-- window border -->
<div class="a" style="left:0;top:0;width:1.300px;height:589px;background:#2b579a"></div>
<div class="a" style="left:839.800px;top:0;width:1.200px;height:589px;background:#2b579a"></div>
<div class="a" style="left:0;top:587.800px;width:841px;height:1.200px;background:#2b579a"></div>
</div>
</body></html>
